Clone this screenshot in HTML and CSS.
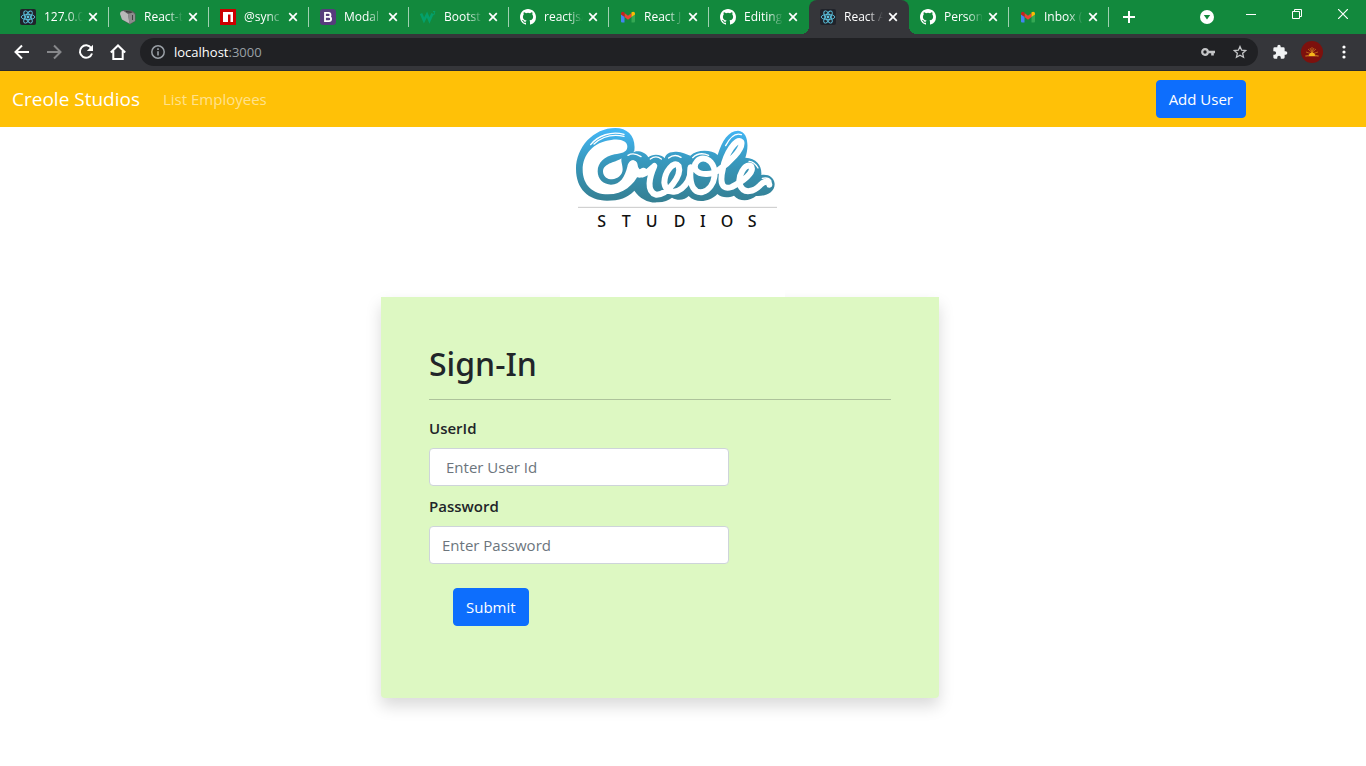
FILE: index.html
```html
<!DOCTYPE html>
<html lang="en">
<head>
<meta charset="utf-8">
<title>React App</title>
<link rel="stylesheet" href="styles.css">
</head>
<body>
<svg class="defs" aria-hidden="true">
  <defs>
    <symbol id="react" viewBox="0 0 16 16">
      <rect width="16" height="16" rx="2" fill="#20232a"/>
      <g fill="none" stroke="#5cc4e0" stroke-width="0.9">
        <ellipse cx="8" cy="8" rx="6.8" ry="2.6"/>
        <ellipse cx="8" cy="8" rx="6.8" ry="2.6" transform="rotate(60 8 8)"/>
        <ellipse cx="8" cy="8" rx="6.8" ry="2.6" transform="rotate(120 8 8)"/>
      </g>
      <circle cx="8" cy="8" r="1.4" fill="#5cc4e0"/>
    </symbol>
    <symbol id="github" viewBox="0 0 16 16">
      <path fill="#fff" d="M8 0C3.58 0 0 3.58 0 8c0 3.54 2.29 6.53 5.47 7.59.4.07.55-.17.55-.38 0-.19-.01-.82-.01-1.49-2.01.37-2.53-.49-2.69-.94-.09-.23-.48-.94-.82-1.13-.28-.15-.68-.52-.01-.53.63-.01 1.08.58 1.23.82.72 1.21 1.87.87 2.33.66.07-.52.28-.87.51-1.07-1.78-.2-3.64-.89-3.64-3.95 0-.87.31-1.59.82-2.15-.08-.2-.36-1.02.08-2.12 0 0 .67-.21 2.2.82a7.6 7.6 0 0 1 4 0c1.53-1.04 2.2-.82 2.2-.82.44 1.1.16 1.92.08 2.12.51.56.82 1.27.82 2.15 0 3.07-1.87 3.75-3.65 3.95.29.25.54.73.54 1.48 0 1.07-.01 1.93-.01 2.2 0 .21.15.46.55.38A8 8 0 0 0 16 8c0-4.42-3.58-8-8-8z"/>
    </symbol>
    <symbol id="gmail" viewBox="0 0 16 16">
      <path fill="#4285f4" d="M1 5l3.500 2.500V13.500H2a1 1 0 0 1-1-1z"/>
      <path fill="#34a853" d="M15 5l-3.500 2.500V13.500H14a1 1 0 0 0 1-1z"/>
      <path fill="#ea4335" d="M4.500 4L8 6.700 11.500 4v4L8 10.700 4.500 8z"/>
      <path fill="#c5221f" d="M1 4.500C1 2.700 3 2 4.500 3.300V8L1 5.500z"/>
      <path fill="#fbbc04" d="M15 4.500C15 2.700 13 2 11.500 3.300V8L15 5.500z"/>
    </symbol>
    <symbol id="close" viewBox="0 0 10 10">
      <path d="M1.200 1.200l7.600 7.600M8.800 1.200L1.200 8.800" fill="none" stroke="#fff" stroke-width="1.700"/>
    </symbol>
  </defs>
</svg>

<header class="browser">
  <div class="tabstrip">
    <div class="tab"><svg class="fav"><use href="#react"/></svg><span class="tab-title">127.0.0</span><button class="tab-close" aria-label="Close tab"><svg><use href="#close"/></svg></button></div>
    <div class="tab"><svg class="fav" viewBox="0 0 16 16"><path fill="#5d5d5d" d="M1 2.500L3.500 1 12 1.500 15.500 4.500V12l-5.500 3.500L2 10.500z"/><path fill="#b9b9b9" d="M0 5q0-3 3.500-3L8 5l1.500 9.500L2 10.500z"/><path fill="#8d8d8d" d="M8 5l5-1.500 2 2v6.500l-5.500 3z"/><path d="M6 2.500l5.500.8" stroke="#333" fill="none"/><path d="M12.500 6v5" stroke="#444" fill="none"/></svg><span class="tab-title">React-t</span><button class="tab-close" aria-label="Close tab"><svg><use href="#close"/></svg></button></div>
    <div class="tab"><svg class="fav" viewBox="0 0 16 16"><path fill="#c00" d="M0 0h16v16H0z"/><path fill="#fff" d="M3 3h10v10h-2.500V5.500H8V13H3z"/></svg><span class="tab-title">@sync</span><button class="tab-close" aria-label="Close tab"><svg><use href="#close"/></svg></button></div>
    <div class="tab"><svg class="fav" viewBox="0 0 16 16"><rect width="16" height="16" rx="3" fill="#563d7c"/><path fill="none" stroke="#fff" stroke-width="1.800" d="M5 3.900h3.500a2 2 0 0 1 0 4H5zM5 7.900h4a2.100 2.100 0 0 1 0 4.200H5z"/></svg><span class="tab-title">Modal</span><button class="tab-close" aria-label="Close tab"><svg><use href="#close"/></svg></button></div>
    <div class="tab"><svg class="fav" viewBox="0 0 16 16"><path fill="none" stroke="#04a06a" stroke-width="2.600" d="M1 4.500l3 7 3-6 2.500 6 3-7"/><path fill="none" stroke="#04a06a" d="M13 2.500h2l-1 1.500q2 1-1 2"/></svg><span class="tab-title">Bootst</span><button class="tab-close" aria-label="Close tab"><svg><use href="#close"/></svg></button></div>
    <div class="tab"><svg class="fav"><use href="#github"/></svg><span class="tab-title">reactjs/</span><button class="tab-close" aria-label="Close tab"><svg><use href="#close"/></svg></button></div>
    <div class="tab"><svg class="fav"><use href="#gmail"/></svg><span class="tab-title">React J</span><button class="tab-close" aria-label="Close tab"><svg><use href="#close"/></svg></button></div>
    <div class="tab before-active"><svg class="fav"><use href="#github"/></svg><span class="tab-title">Editing</span><button class="tab-close" aria-label="Close tab"><svg><use href="#close"/></svg></button></div>
    <div class="tab active"><svg class="fav"><use href="#react"/></svg><span class="tab-title">React A</span><button class="tab-close" aria-label="Close tab"><svg><use href="#close"/></svg></button></div>
    <div class="tab"><svg class="fav"><use href="#github"/></svg><span class="tab-title">Person</span><button class="tab-close" aria-label="Close tab"><svg><use href="#close"/></svg></button></div>
    <div class="tab"><svg class="fav"><use href="#gmail"/></svg><span class="tab-title">Inbox (</span><button class="tab-close" aria-label="Close tab"><svg><use href="#close"/></svg></button></div>
    <button class="new-tab" aria-label="New tab"><svg viewBox="0 0 12 12"><path d="M6 0v12M0 6h12" stroke="#fff" stroke-width="2"/></svg></button>
    <div class="window-controls">
      <button class="search-tabs" aria-label="Search tabs"><svg viewBox="0 0 14 14"><circle cx="7" cy="7" r="7" fill="#fff"/><path d="M3.800 5h6.400L7 9.500z" fill="#12893d"/></svg></button>
      <button aria-label="Minimize"><svg viewBox="0 0 10 10"><path d="M0 5.500h10" stroke="#fff"/></svg></button>
      <button aria-label="Restore"><svg viewBox="0 0 10 10"><path d="M.5 2.500h7v7h-7zM2.500 2.500v-2h7v7h-2" fill="none" stroke="#fff"/></svg></button>
      <button aria-label="Close"><svg viewBox="0 0 10 10"><path d="M0 0l10 10M10 0L0 10" stroke="#fff" stroke-width="1.200"/></svg></button>
    </div>
  </div>
  <div class="toolbar">
    <button class="tool" aria-label="Back"><svg viewBox="0 0 16 16"><path d="M15 8H2M8 1.500L1.500 8 8 14.500" fill="none" stroke="#fff" stroke-width="2"/></svg></button>
    <button class="tool" aria-label="Forward"><svg viewBox="0 0 16 16"><path d="M1 8h13M8 1.500L14.500 8 8 14.500" fill="none" stroke="#87888b" stroke-width="2"/></svg></button>
    <button class="tool" aria-label="Reload"><svg viewBox="0 0 16 16"><path d="M13.200 4A6.200 6.200 0 1 0 14 9.500" fill="none" stroke="#fff" stroke-width="2"/><path d="M15 .8V7H8.800z" fill="#fff"/></svg></button>
    <button class="tool" aria-label="Home"><svg viewBox="0 0 16 16"><path d="M.8 8.500L8 1.500l7.200 7M3.300 7v8h9.400V7" fill="none" stroke="#fff" stroke-width="2"/></svg></button>
    <div class="address">
      <svg class="info" viewBox="0 0 14 14"><circle cx="7" cy="7" r="6.200" fill="none" stroke="#9aa0a6" stroke-width="1.500"/><path d="M7 6.200v4.300M7 3.300v1.600" stroke="#9aa0a6" stroke-width="1.600"/></svg>
      <span class="url">localhost<span class="port">:3000</span></span>
      <svg class="key" viewBox="0 0 14 8"><circle cx="4" cy="4" r="2.800" fill="none" stroke="#c4c5c7" stroke-width="2.200"/><path d="M7 4h7M11.500 4v3.500" fill="none" stroke="#c4c5c7" stroke-width="2.600"/></svg>
      <svg class="star" viewBox="0 0 14 14"><path d="M7 1.500l1.650 3.700 4.050.4-3.050 2.700.9 3.950L7 10.200l-3.550 2.050.9-3.950L1.300 5.600l4.050-.4z" fill="none" stroke="#c4c5c7" stroke-width="1.300"/></svg>
    </div>
    <button class="tool ext" aria-label="Extensions"><svg viewBox="0 0 24 24"><path fill="#f1f3f4" d="M20.500 11H19V7a2 2 0 0 0-2-2h-4V3.500a2.500 2.500 0 0 0-5 0V5H4a2 2 0 0 0-2 2v3.800h1.500a2.700 2.700 0 0 1 0 5.400H2V20a2 2 0 0 0 2 2h3.800v-1.500a2.700 2.700 0 0 1 5.400 0V22H17a2 2 0 0 0 2-2v-4h1.500a2.500 2.500 0 0 0 0-5z"/></svg></button>
    <button class="tool profile" aria-label="Profile"><svg viewBox="0 0 22 22"><circle cx="11" cy="11" r="11" fill="#7d110d"/><path d="M4 15h14M5 11l12 4M17 11L5 15M7 8l8 7M15 8l-8 7M11 6v9M9 7l4 8M13 7l-4 8" stroke="#c5701c" stroke-width=".8"/><path d="M8 15a3 3.500 0 0 1 6 0z" fill="#f6b81c"/></svg></button>
    <button class="tool menu" aria-label="Menu"><svg viewBox="0 0 4 14"><circle cx="2" cy="2" r="1.600" fill="#fff"/><circle cx="2" cy="7" r="1.600" fill="#fff"/><circle cx="2" cy="12" r="1.600" fill="#fff"/></svg></button>
  </div>
</header>

<nav class="navbar">
  <a class="brand" href="#">Creole Studios</a>
  <a class="nav-link" href="#">List Employees</a>
  <button class="btn add-user" type="button">Add User</button>
</nav>

<main>
  <div class="hero">
    <svg class="logo" viewBox="-36 9 675 510" role="img" aria-label="Creole Studios">
      <defs>
        <linearGradient id="sea" gradientUnits="userSpaceOnUse" x1="0" y1="12" x2="0" y2="235">
          <stop offset="0" stop-color="#44b8f8"/><stop offset=".45" stop-color="#3798bd"/><stop offset="1" stop-color="#357f92"/>
        </linearGradient>
      </defs>
      <path fill="url(#sea)" d="M187 80C192 38 168 12 130 12C64 12 12 70 12 135C12 195 50 230 105 230C142 230 167 221 187 200C205 226 232 238 258 235C276 234 290 229 300 221C320 233 340 226 350 216C370 238 412 236 436 210C450 222 468 222 486 215C502 234 534 232 552 216C576 218 608 208 608 180C606 160 590 150 568 153C570 125 555 103 520 101C530 76 532 22 498 20C470 20 450 50 437 93C418 76 374 76 355 95C340 90 325 80 305 84C288 84 280 94 278 103C270 90 240 88 229 100C218 80 190 78 183 86Z"/>
      <path fill="#fff" d="M118 48C146 43 167 52 166 69C165 87 146 87 128 91C98 97 77 116 77 142C77 166 95 182 117 182C146 181 158 158 166 128C169 112 182 102 192 114L200 150C186 182 154 211 108 211C62 211 32 182 32 137C32 92 64 54 118 48Z"/>
      <path fill="#fff" d="M148 103C138 114 93 116 93 143C94 158 106 166 120 166C137 165 152 153 152 136C152 124 147 116 148 103Z"/>
      <g fill="none" stroke="#fff" stroke-linecap="round" stroke-linejoin="round">
        <path stroke-width="25" d="M184 122C186 145 201 154 214 144"/>
        <path stroke-width="18" d="M212 151C226 147 237 135 247 126C232 160 222 202 252 212C286 214 330 155 320 126C306 108 278 142 277 176C282 216 325 210 348 171C358 150 355 136 356 130"/>
        <path stroke-width="18" d="M356 132C350 190 370 208 392 204C432 192 442 125 405 106C380 96 362 120 371 138C385 156 423 152 440 138C472 116 514 74 508 54C492 40 461 90 453 132C442 178 450 198 479 189C512 172 550 145 537 126C518 118 497 155 503 181C516 215 548 200 564 184C577 170 590 170 592 182"/>
        <path stroke-width="4" d="M56 62C78 34 118 21 156 31M66 60C88 40 120 29 156 37"/>
        <path stroke-width="4" d="M168 94Q185 84 207 98M235 105Q252 92 268 105M290 102Q308 88 327 100M362 101Q382 82 410 94M461 65C475 38 490 25 508 32M531 112Q548 113 558 132M571 163Q590 159 597 171"/>
      </g>
      <path d="M18 250H615" stroke="#c8c8c8" stroke-width="3"/>
      <g class="logo-text">
        <text x="76" y="308">S</text><text x="149" y="308">T</text><text x="221" y="308">U</text><text x="305" y="308">D</text><text x="384" y="308">I</text><text x="446" y="308">O</text><text x="527" y="308">S</text>
      </g>
    </svg>
  </div>
  <div class="content">
    <form class="card">
      <h2>Sign-In</h2>
      <hr>
      <label for="user">UserId</label>
      <input id="user" class="user" type="text" placeholder="Enter User Id">
      <label for="password">Password</label>
      <input id="password" type="password" placeholder="Enter Password">
      <button class="btn submit" type="button">Submit</button>
    </form>
  </div>
</main>
</body>
</html>
```
FILE: styles.css
```css
* { box-sizing: border-box; }
body {
  margin: 0;
  min-height: 100vh;
  background: #fff;
  color: #212529;
  font-family: "Open Sans", "Noto Sans", sans-serif;
  font-size: 15px;
  line-height: 24px;
}
button { margin: 0; padding: 0; border: 0; background: none; font: inherit; color: inherit; }
svg { display: block; }
a { text-decoration: none; }
.defs { position: absolute; width: 0; height: 0; }

.tabstrip { display: flex; height: 34px; padding-left: 9px; background: #12893d; }
.tab {
  display: flex;
  align-items: center;
  flex: 0 1 100px;
  min-width: 0;
  padding: 0 11px;
  position: relative;
  color: #fff;
  font-size: 12px;
}
.tab::after { content: ""; position: absolute; right: 0; top: 7px; width: 1px; height: 20px; background: #a0d0b1; }
.tab.before-active::after, .tab.active::after { display: none; }
.tab.active { background: #35363a; border-radius: 8px 8px 0 0; }
.tab.active::before {
  content: "";
  position: absolute;
  left: -8px;
  right: -8px;
  bottom: 0;
  height: 8px;
  background:
    radial-gradient(circle at 0 0, transparent 8px, #35363a 8px) left / 8px 8px no-repeat,
    radial-gradient(circle at 100% 0, transparent 8px, #35363a 8px) right / 8px 8px no-repeat;
}
.fav { flex: none; width: 16px; height: 16px; }
.tab-title {
  flex: 1;
  min-width: 0;
  margin-left: 8px;
  white-space: nowrap;
  mask-image: linear-gradient(to right, #000 60%, transparent 100%);
}
.tab-close { flex: none; margin-left: 5px; }
.tab-close svg { width: 10px; height: 10px; }
.new-tab { flex: none; margin-left: 14px; }
.new-tab svg { width: 12px; height: 12px; }
.window-controls { display: flex; height: 28px; margin-left: auto; }
.window-controls button { display: grid; place-items: center; width: 46px; }
.window-controls svg { width: 10px; height: 10px; }
.window-controls .search-tabs { width: 42px; height: 34px; }
.window-controls .search-tabs svg { width: 14px; height: 14px; }

.toolbar {
  display: flex;
  align-items: center;
  height: 37px;
  padding: 0 6px;
  background: #35363a;
  border-bottom: 1px solid #2a2b2e;
}
.tool { display: grid; place-items: center; flex: none; width: 32px; height: 32px; }
.tool svg { width: 16px; height: 16px; }
.tool.ext { margin-left: 6px; }
.tool.profile svg { width: 22px; height: 22px; }
.tool.menu svg { width: 4px; height: 14px; }
.address {
  display: flex;
  align-items: center;
  flex: 1;
  height: 28px;
  margin-left: 6px;
  padding: 0 11px;
  border-radius: 14px;
  background: #202124;
}
.info { width: 14px; height: 14px; }
.url { flex: 1; margin-left: 9px; color: #fff; font-size: 13px; }
.port { color: #9aa0a6; }
.key { width: 14px; height: 8px; }
.star { width: 14px; height: 14px; margin-left: 18px; }

.navbar {
  display: flex;
  align-items: center;
  height: 56px;
  padding: 0 120px 0 12px;
  background: #ffc107;
}
.brand { color: #fff; font-size: 19px; }
.nav-link { margin-left: 23px; color: rgba(255, 255, 255, .55); }
.btn {
  height: 38px;
  padding: 0 12px;
  border: 1px solid #0d6efd;
  border-radius: 4px;
  background: #0d6efd;
  color: #fff;
}
.add-user { margin-left: auto; }

main { padding-bottom: 48px; }
.hero { display: flex; justify-content: center; padding-right: 21px; }
.logo { position: relative; z-index: 1; width: 225px; height: 170px; background: #fff; }
.logo-text { font-family: "Noto Sans", "Open Sans", sans-serif; font-size: 48px; font-weight: 500; fill: #111; }
.content { display: flex; justify-content: center; max-width: 1320px; }
.card {
  display: flex;
  flex-direction: column;
  align-items: flex-start;
  width: 558px;
  padding: 48px 48px 72px;
  border-radius: 0 0 4px 4px;
  background: #ddf8c2;
  box-shadow: 0 8px 16px rgba(0, 0, 0, .15);
}
.card h2 { margin: 0; font-family: "Noto Sans", "Open Sans", sans-serif; font-size: 32px; font-weight: 500; line-height: 38px; }
.card hr { align-self: stretch; height: 1px; margin: 16px 0; border: 0; background: #212529; opacity: .25; }
.card label { margin-bottom: 8px; font-weight: 600; }
.card input {
  width: 300px;
  height: 38px;
  margin-bottom: 8px;
  padding: 0 12px;
  border: 1px solid #ced4da;
  border-radius: 4px;
  background: #fff;
  color: #212529;
  font: inherit;
}
.card input.user { padding-left: 16px; }
.card input::placeholder { color: #6c757d; opacity: 1; }
.submit { margin: 16px 0 0 24px; }
```
